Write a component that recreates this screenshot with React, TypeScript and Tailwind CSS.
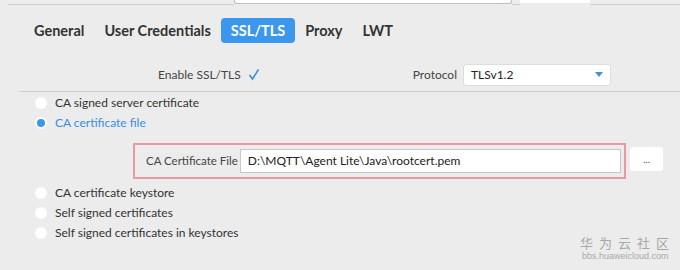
import { useState } from 'react';

const radios = [
  'CA signed server certificate',
  'CA certificate file',
  'CA certificate keystore',
  'Self signed certificates',
  'Self signed certificates in keystores',
];

const tabs = ['General', 'User Credentials', 'SSL/TLS', 'Proxy', 'LWT'];

const Radio = ({ label, checked }: { label: string; checked: boolean }) => (
  <div className="flex items-center h-[20px]">
    <span className="w-[12px] h-[12px] rounded-full bg-white flex items-center justify-center">
      {checked && <span className="w-[8px] h-[8px] rounded-full bg-[#3c96ec]" />}
    </span>
    <span className={`ml-[8px] text-[12px] ${checked ? 'text-[#3a8de4]' : 'text-[#333]'}`}>{label}</span>
  </div>
);

export default function App() {
  const [tab] = useState('SSL/TLS');

  return (
    <div className="w-[680px] h-[270px] bg-[#ececec] relative overflow-hidden font-['Lato','Liberation_Sans',sans-serif]">
      {/* top remnants of the window above */}
      <div className="flex items-start h-[8px]">
        <div className="mt-[4px] ml-[8px] w-[226px] h-[1px] bg-[#cfcfcf]" />
        <div className="w-[278px] h-[4px] bg-white border-x border-b border-[#c9b9b9] rounded-b-[3px]" />
        <div className="mt-[4px] w-[8px] h-[1px] bg-[#cfcfcf]" />
        <div className="w-[70px] h-[3px] bg-white" />
        <div className="mt-[4px] flex-1 h-[1px] bg-[#cfcfcf]" />
      </div>

      {/* tabs */}
      <div className="flex items-center ml-[24px] mt-[10px] h-[25px]">
        {tabs.map((t) => (
          <div
            key={t}
            className={`px-[10px] h-[25px] flex items-center rounded-[4px] text-[14.5px] font-bold ${
              t === tab ? 'bg-[#3b97ee] text-white' : 'text-[#333]'
            }`}
          >
            {t}
          </div>
        ))}
      </div>

      {/* options row */}
      <div className="flex items-center h-[23px] mt-[20px]">
        <span className="ml-[158px] text-[12px] text-[#444]">Enable SSL/TLS</span>
        <svg className="ml-[7px]" width="12" height="13" viewBox="0 0 12 13">
          <path d="M1.5 7 L4.5 11 L10.5 1.5" fill="none" stroke="#3b8fe0" strokeWidth="1.6" />
        </svg>
        <span className="ml-[153px] text-[12px] text-[#444]">Protocol</span>
        <div className="ml-[6px] w-[148px] h-[22px] bg-white rounded-[3px] border border-[#dddddd] flex items-center px-[7px] text-[12px] text-[#222]">
          <span className="flex-1">TLSv1.2</span>
          <svg width="8" height="5" viewBox="0 0 8 5">
            <path d="M0 0 L8 0 L4 5 Z" fill="#4a90d9" />
          </svg>
        </div>
      </div>

      <div className="ml-[20px] mt-[5px] h-[1px] bg-[#cccccc]" />

      {/* radios */}
      <div className="ml-[35px] mt-[1px] flex flex-col">
        <Radio label={radios[0]} checked={false} />
        <Radio label={radios[1]} checked />
      </div>

      <div className="ml-[133px] mt-[10px] w-[493px] h-[36px] border-2 border-[#e89aa3] flex items-center">
        <span className="ml-[11px] shrink-0 whitespace-nowrap text-[11.5px] text-[#444]">CA Certificate File</span>
        <div className="ml-[2px] mr-[3px] flex-1 h-[24px] bg-white border border-[#c8c8c8] flex items-center px-[7px] text-[12px] text-[#222] whitespace-nowrap">
          D:\MQTT\Agent Lite\Java\rootcert.pem
        </div>
      </div>
      <div className="absolute left-[630px] top-[147px] w-[33px] h-[24px] bg-white rounded-[3px] flex items-center justify-center text-[10px] text-[#555]">
        ...
      </div>

      <div className="ml-[35px] mt-[4px] flex flex-col">
        <Radio label={radios[2]} checked={false} />
        <Radio label={radios[3]} checked={false} />
        <Radio label={radios[4]} checked={false} />
      </div>

      {/* watermark */}
      <div className="absolute left-[580px] top-[234px] flex flex-col items-start text-[#a8a8a8] whitespace-nowrap">
        <span className="text-[13px] tracking-[6px] font-['Noto_Sans_CJK_SC',sans-serif] leading-[17px]">华为云社区</span>
        <span className="ml-[2px] text-[9px] leading-[10px] font-['Liberation_Sans',sans-serif]">bbs.huaweicloud.com</span>
      </div>
    </div>
  );
}
